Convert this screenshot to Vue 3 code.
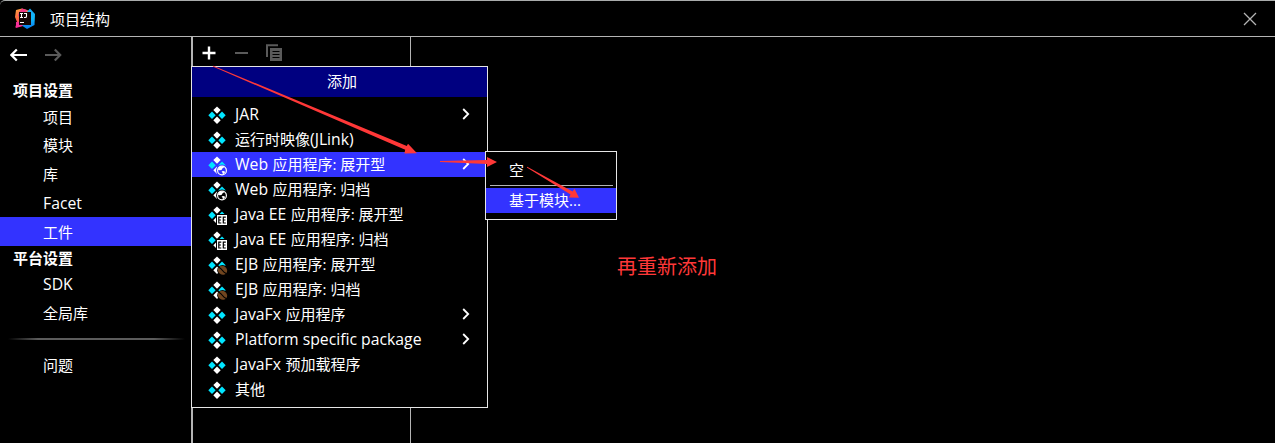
<script setup>
const nav = [
  { t: '项目设置', head: true, h: 'h26' },
  { t: '项目', h: 'h28' },
  { t: '模块', h: 'h29', up: true },
  { t: '库', h: 'h29', up: true },
  { t: 'Facet', h: 'h28', latin: true },
  { t: '工件', h: 'h29', active: true },
  { t: '平台设置', head: true, h: 'h25', up: true },
  { t: 'SDK', h: 'h28', up: true, latin: true },
  { t: '全局库', h: 'h29', up: true },
]
const menu = [
  { a: 'JAR', b: '', sub: true },
  { a: '', b: '运行时映像', c: '(JLink)' },
  { a: 'Web', b: '应用程序: 展开型', badge: 'web', active: true, sub: true },
  { a: 'Web', b: '应用程序: 归档', badge: 'web' },
  { a: 'Java EE', b: '应用程序: 展开型', badge: 'ee' },
  { a: 'Java EE', b: '应用程序: 归档', badge: 'ee' },
  { a: 'EJB', b: '应用程序: 展开型', badge: 'ejb' },
  { a: 'EJB', b: '应用程序: 归档', badge: 'ejb' },
  { a: 'JavaFx', b: '应用程序', sub: true },
  { a: 'Platform specific package', b: '', sub: true },
  { a: 'JavaFx', b: '预加载程序' },
  { a: '', b: '其他' },
]
</script>

<template>
  <div class="window">
    <header class="titlebar">
      <svg class="logo" width="22" height="22" viewBox="0 0 22 22">
        <defs>
          <linearGradient id="warm" x1="0" y1="0" x2="0" y2="1">
            <stop offset="0" stop-color="#ffa040" /><stop offset=".5" stop-color="#fc6a3f" /><stop offset="1" stop-color="#f0288c" />
          </linearGradient>
          <linearGradient id="cool" x1="0" y1="0" x2="0" y2="1">
            <stop offset="0" stop-color="#18a8f8" /><stop offset=".5" stop-color="#10b8f8" /><stop offset="1" stop-color="#0878f0" />
          </linearGradient>
        </defs>
        <path d="M2 2 8 .5 16 3 12 18 4 17 1 20 3 14 1 9Z" fill="url(#warm)" />
        <path d="M8 .5 13 2 9 10 4 8 5 4Z" fill="#f03888" />
        <path d="M13 4 16 .5 21 6 20.5 17 13 21 7 17Z" fill="url(#cool)" />
        <path d="M2 14 5 14 9 18 2 20Z" fill="#f52f98" />
        <rect x="5" y="4" width="12" height="13" fill="#120606" />
        <path d="M6 5.5H9M7.5 5.5V9.5M6 9.5H9M10 5.5H12.5V8.2Q12.5 9.5 11.2 9.5H10M6 14.5H10" fill="none" stroke="#fff" stroke-width="1.1" />
      </svg>
      <span class="title">项目结构</span>
      <svg class="close" width="14" height="14" viewBox="0 0 14 14"><path d="M1 1 13 13M13 1 1 13" stroke="#b4b4b4" stroke-width="1.3" /></svg>
    </header>
    <div class="body">
      <aside class="sidebar">
        <div class="history">
          <svg width="18" height="14" viewBox="0 0 18 14"><path d="M17 7H2M6.8 1.5 1.4 7 6.8 12.5" fill="none" stroke="#fff" stroke-width="2.2" /></svg>
          <svg width="18" height="14" viewBox="0 0 18 14"><path d="M1 7H16M10.8 1.5 16.2 7 10.8 12.5" fill="none" stroke="#5a5a5a" stroke-width="2.2" /></svg>
        </div>
        <div v-for="n in nav" :key="n.t" class="nav" :class="[n.h, { head: n.head, active: n.active, up: n.up, en: n.latin }]">{{ n.t }}</div>
        <div class="rule"></div>
        <div class="nav h29 up">问题</div>
      </aside>
      <section class="list">
        <div class="tools">
          <svg width="14" height="14" viewBox="0 0 14 14"><path d="M7 .5V13.5M.5 7H13.5" stroke="#fff" stroke-width="2.4" /></svg>
          <svg class="minus" width="13" height="14" viewBox="0 0 13 14"><path d="M0 7H13" stroke="#5a5a5a" stroke-width="2" /></svg>
          <svg class="copy" width="16" height="18" viewBox="0 0 16 18">
            <path d="M1 13V1.2H12" fill="none" stroke="#5a5a5a" stroke-width="2" />
            <rect x="4" y="4" width="12" height="13" fill="#5a5a5a" />
            <path d="M6.5 7.5H13.5M6.5 10.5H13.5M6.5 13.5H13.5" stroke="#000" />
          </svg>
        </div>
      </section>
      <main class="detail"></main>
    </div>

    <div class="popup">
      <div class="popup-title">添加</div>
      <div class="rows">
        <div v-for="(m, i) in menu" :key="i" class="row" :class="{ active: m.active }">
          <svg class="kind" width="20" height="20" viewBox="0 0 20 20">
            <path d="M9 .4 12.7 4.1 9 7.8 5.3 4.1Z" fill="#fff" />
            <path d="M9 10.6 12.7 14.3 9 18 5.3 14.3Z" fill="#fff" />
            <path d="M4 5.5 7.7 9.2 4 12.9 .3 9.2Z" fill="#00e5ff" />
            <path d="M14 5.5 17.7 9.2 14 12.9 10.3 9.2Z" fill="#00e5ff" />
            <g v-if="m.badge === 'web'">
              <circle cx="14" cy="14.5" r="5.9" :fill="m.active ? '#3333ff' : '#000'" />
              <circle cx="14" cy="14.5" r="4.4" fill="none" stroke="#fff" stroke-width="1.2" />
              <path d="M9.8 13.6 11.2 11 14.3 10.2 16.2 11.3 14.6 12.3 13.5 14 11.3 14.2ZM13.6 15.2 16.3 15 17 16.5 15 18.6 14.6 17Z" fill="#fff" />
            </g>
            <g v-if="m.badge === 'ee'">
              <rect x="8" y="8" width="12" height="12" fill="#000" />
              <rect x="9" y="9" width="10" height="10" fill="#fff" />
              <path d="M13.3 11.2H10.8V17H13.3M10.8 14H13M17.8 11.2H15.3V17H17.8M15.3 14H17.5" fill="none" stroke="#000" stroke-width="1.2" />
            </g>
            <g v-if="m.badge === 'ejb'">
              <circle cx="14.5" cy="14.3" r="5.3" fill="#000" />
              <ellipse cx="14.5" cy="14.3" rx="4.8" ry="4.3" fill="#70451f" transform="rotate(35 14.5 14.3)" />
              <path d="M10.8 11.2Q13 12.3 14.3 14.3T18.5 17.8" fill="none" stroke="#000" stroke-width="1.1" />
            </g>
          </svg>
          <span class="label"><span v-if="m.a" class="en">{{ m.a }}</span><span v-if="m.a && m.b" class="gap">&nbsp;</span>{{ m.b }}<span v-if="m.c" class="en">{{ m.c }}</span></span>
          <svg v-if="m.sub" class="chev" width="8" height="12" viewBox="0 0 8 12"><path d="M1.2 1 6.2 6 1.2 11" fill="none" stroke="#fff" stroke-width="1.8" /></svg>
        </div>
      </div>
    </div>

    <div class="submenu">
      <div class="row plain first">空</div>
      <div class="sep"></div>
      <div class="row plain active">基于模块...</div>
    </div>

    <svg class="arrows" width="1275" height="443" viewBox="0 0 1275 443">
      <g fill="#ff3838">
        <path d="M213.2 65.7 406.8 146 408 143.8 417 153.2 404.4 153.4 405.2 149.8 212.8 66.5Z" />
        <path d="M440 161 487 160 487 157 497 162 487 167 487 164 440 162Z" />
        <path d="M527.2 166.8 572.6 191.4 574.5 188.8 579 197.8 569 197.5 570.6 194.6 526.8 167.6Z" />
      </g>
    </svg>
    <div class="note">再重新添加</div>
  </div>
</template>

<style>
body { background: #000; overflow: hidden; }
</style>

<style scoped>
* { box-sizing: border-box; }
.window { position: relative; width: 1275px; height: 443px; background: #000; color: #fff; font: 15px/20px "Open Sans", "Noto Sans CJK SC", sans-serif; white-space: nowrap; overflow: hidden; display: flex; flex-direction: column; }
.titlebar { height: 37px; border-top: 1px solid #a9acab; border-bottom: 1px solid #b4b4b4; border-top-left-radius: 5px; display: flex; align-items: center; padding: 0 18px 0 14px; flex: none; }
.title { margin-left: 14px; }
.close { margin-left: auto; }
.body { display: flex; flex: 1; }
.sidebar { width: 191px; }
.history { height: 40px; padding: 11px 0 0 10px; display: flex; gap: 16px; }
.nav { display: flex; align-items: center; padding-left: 43px; }
.nav.head { padding-left: 13px; font-weight: 700; }
.nav.up { padding-bottom: 2px; }
.en { font-size: 15.75px; }
.gap { font-size: 17px; }
.active { background: #3333ff; }
.h25 { height: 25px; }
.h26 { height: 26px; }
.h28 { height: 28px; }
.h29 { height: 29px; }
.rule { height: 2px; margin: 10px 6px 11px 8px; background: linear-gradient(90deg, #000, #5c5c5c 30px, #5c5c5c 146px, #000); }
.list { width: 220px; border-left: 2px solid #b4b4b4; border-right: 1px solid #b4b4b4; }
.tools { display: flex; align-items: center; height: 30px; padding: 2px 0 0 9px; }
.minus { margin-left: 19px; }
.copy { margin-left: 18px; }
.detail { flex: 1; }
.popup { position: absolute; left: 191px; top: 66px; width: 297px; height: 342px; border: 1px solid #e6e6e6; background: #000; }
.popup-title { height: 30px; line-height: 29px; background: #000080; text-align: center; padding-left: 5px; }
.rows { padding-top: 5px; }
.row { display: flex; align-items: center; height: 25px; padding: 0 17px 2px 16px; }
.kind { flex: none; margin-top: 4px; }
.label { margin-left: 7px; }
.chev { margin-left: auto; }
.submenu { position: absolute; left: 485px; top: 151px; width: 132px; height: 69px; border: 1px solid #e6e6e6; background: #000; padding-top: 5px; }
.plain { padding-left: 23px; }
.first { padding-bottom: 0; }
.sep { height: 1px; margin: 3px 3px 2px 4px; background: #b4b4b4; }
.arrows { position: absolute; left: 0; top: 0; }
.note { position: absolute; left: 617px; top: 253px; font-size: 20px; line-height: 28px; color: #ff3838; }
</style>
